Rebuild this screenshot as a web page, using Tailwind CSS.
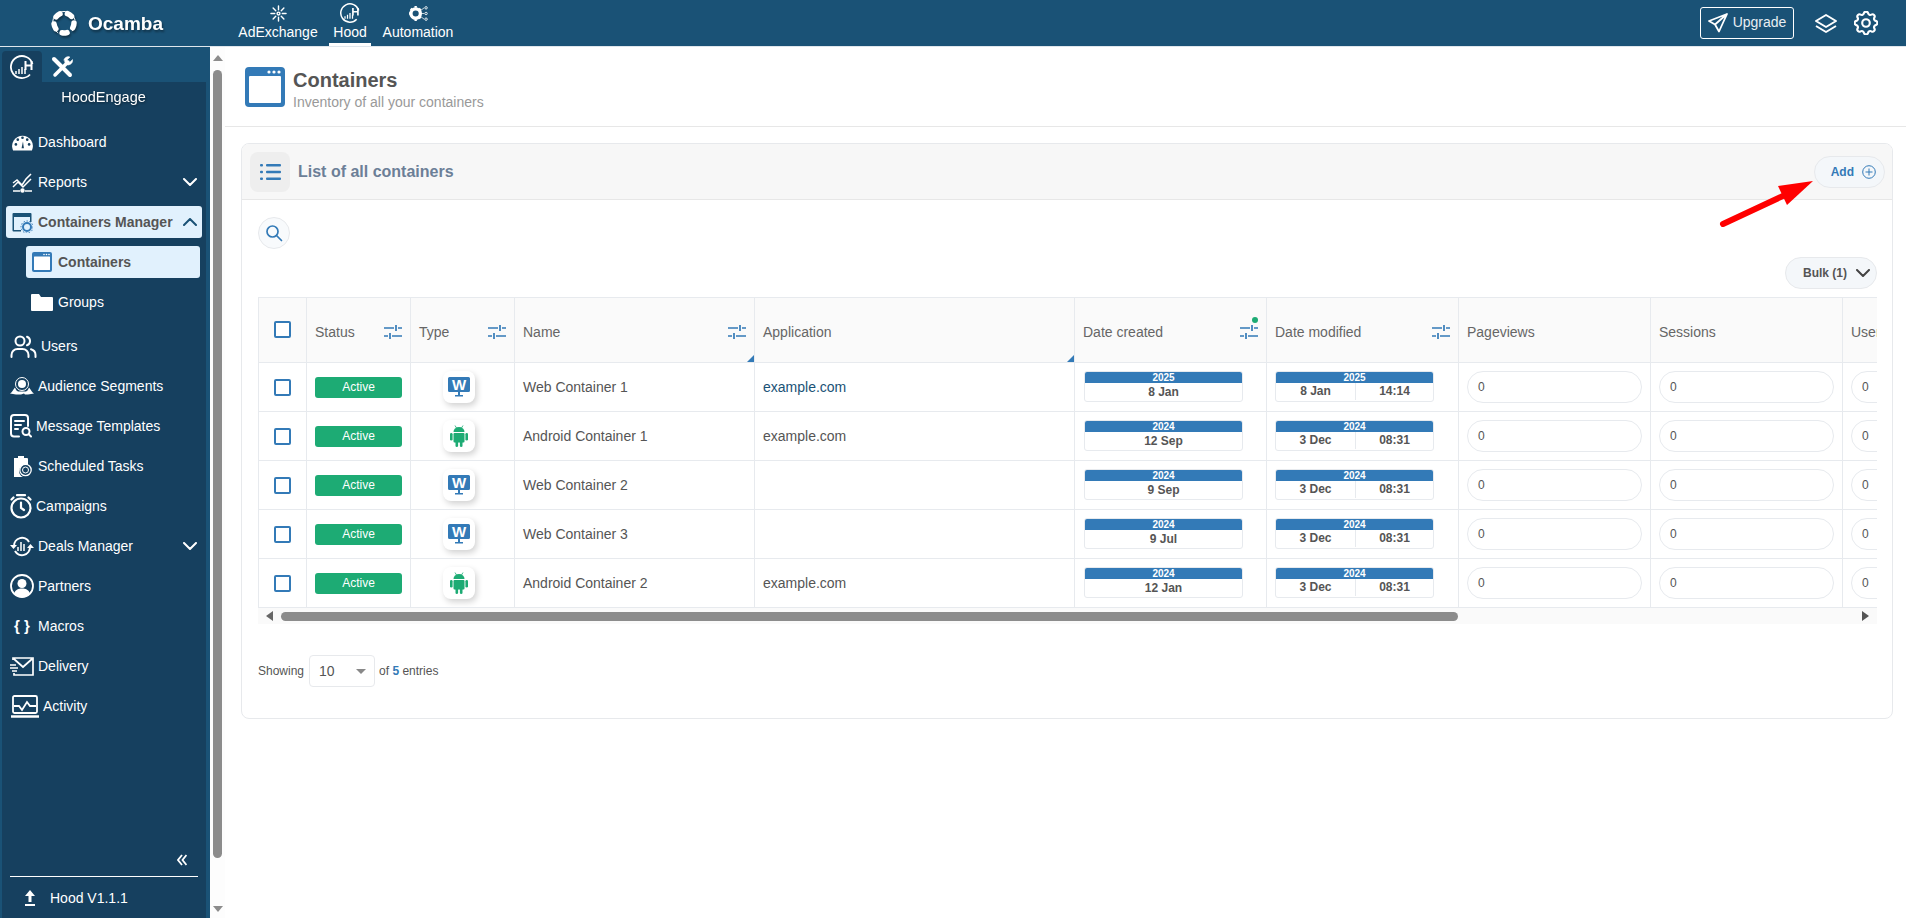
<!DOCTYPE html>
<html lang="en">
<head>
  <meta charset="UTF-8">
  <meta name="viewport" content="width=device-width, initial-scale=1.0">
  <title>Containers</title>
  <script src="https://cdn.jsdelivr.net/npm/@tailwindcss/browser@4"></script>
</head>
<body class="h-screen overflow-hidden bg-white flex flex-col font-['Liberation_Sans',Arial,sans-serif] text-[14px] text-[#555]">

  <!-- shared icons -->
  <svg class="hidden">
    <symbol id="i-window" viewBox="0 0 40 40">
      <rect width="40" height="40" rx="4" fill="#337ab7"/>
      <rect x="4" y="9" width="32" height="27" rx="1" fill="#fff"/>
      <circle cx="24" cy="5" r="1.6" fill="#fff"/><circle cx="29" cy="5" r="1.6" fill="#fff"/><circle cx="34" cy="5" r="1.6" fill="#fff"/>
    </symbol>
    <symbol id="i-sliders" viewBox="0 0 18 14" fill="none" stroke="#337ab7" stroke-width="1.7">
      <path d="M0 3h10M14 3h4M12 0v6M0 11h4M8 11h10M6 8v6"/>
    </symbol>
    <symbol id="i-web" viewBox="0 0 22 20">
      <path d="M1.5 0h19A1.500 1.500 0 0 1 22 1.500v12a1.500 1.500 0 0 1-1.500 1.500h-19A1.500 1.500 0 0 1 0 13.500v-12A1.500 1.500 0 0 1 1.500 0z" fill="#337ab7"/>
      <path d="M10 15h2v3h3v1.500H7V18h3z" fill="#337ab7"/>
      <text x="11" y="12.500" text-anchor="middle" font-size="15" font-weight="700" font-family="Liberation Sans" fill="#fff">W</text>
    </symbol>
    <symbol id="i-android" viewBox="0 0 18 22" fill="#1dab74">
      <rect x="3.500" y="8" width="11" height="9.500" rx="1"/>
      <path d="M3.500 7a5.500 5 0 0 1 11 0z"/>
      <path d="M5 .5 6.500 3M13 .5 11.500 3" stroke="#1dab74" stroke-width=".8"/>
      <rect x="0" y="8" width="2.600" height="7.500" rx="1.300"/><rect x="15.400" y="8" width="2.600" height="7.500" rx="1.300"/>
      <rect x="5.500" y="16" width="2.600" height="6" rx="1.300"/><rect x="9.900" y="16" width="2.600" height="6" rx="1.300"/>
    </symbol>
    <symbol id="i-hood" viewBox="0 0 24 24" fill="none" stroke="#fff">
      <path d="M20 19.500A11 11 0 1 1 22.500 9" stroke-width="1.800"/>
      <path d="M6 19v-3M9 19v-5M12 19v-7M15 19v-5" stroke-width="1.500"/>
      <path d="M15.500 6v9M21.500 6v9M15.500 10.500h6" stroke-width="2"/>
    </symbol>
    <symbol id="i-chev" viewBox="0 0 14 8" fill="none" stroke-width="2" stroke-linecap="round" stroke-linejoin="round">
      <path d="M1 1l6 6 6-6"/>
    </symbol>
  </svg>

  <!-- top bar -->
  <header class="h-[47px] shrink-0 bg-[#1a5276] border-b border-[#dfe6ec] flex items-center text-white relative">
    <div class="w-[237px] pl-[50px] flex items-center gap-[10px]">
      <svg class="w-[28px] h-[28px] drop-shadow-[1px_2px_1px_rgba(0,0,0,0.4)]" viewBox="0 0 28 28" fill="none">
        <circle cx="14" cy="14" r="10" stroke="#fff" stroke-width="5.500" stroke-dasharray="5 7.570" stroke-linecap="round"/>
        <circle cx="14" cy="14" r="11.500" stroke="#fff" stroke-width="1" stroke-dasharray="9 3"/>
      </svg>
      <span class="text-[19px] font-bold leading-none drop-shadow-[1px_2px_1px_rgba(0,0,0,0.4)]">Ocamba</span>
    </div>
    <nav class="flex items-start h-[46px]">
      <a class="w-[82px] flex flex-col items-center pt-[5px]">
        <svg class="w-[17px] h-[17px]" viewBox="0 0 18 18" fill="none" stroke="#fff" stroke-width="1.500" stroke-linecap="round">
          <path d="M9 1v4M9 13v4M1 9h4M13 9h4M3.300 3.300l2.800 2.800M11.900 11.900l2.800 2.800M14.700 3.300l-2.800 2.800M6.100 11.900l-2.800 2.800"/>
          <circle cx="9" cy="9" r="1.500"/>
        </svg>
        <span class="leading-none mt-[3px] whitespace-nowrap">AdExchange</span>
      </a>
      <a class="ml-[10px] w-[42px] h-[46px] flex flex-col items-center pt-[3px] border-b-[3px] border-white">
        <svg class="w-[20px] h-[20px]"><use href="#i-hood"/></svg>
        <span class="leading-none mt-[2px]">Hood</span>
      </a>
      <a class="ml-[11px] w-[72px] flex flex-col items-center pt-[5px]">
        <svg class="w-[21px] h-[17px]" viewBox="0 0 22 18" fill="none" stroke="#fff">
          <circle cx="8" cy="9" r="5" stroke-width="3.500"/>
          <path d="M8 1v2M8 15v2M1 9h2M2.800 3.800l1.500 1.500M11.700 12.700l1.500 1.500M13.200 3.800l-1.500 1.500" stroke-width="2.500"/>
          <path d="M13 9h4M13 6l4-3M13 12l4 3" stroke-width=".8"/>
          <circle cx="19" cy="3" r="1.300" stroke-width=".9"/><circle cx="19" cy="9" r="1.300" stroke-width=".9"/><circle cx="19" cy="15" r="1.300" stroke-width=".9"/>
        </svg>
        <span class="leading-none mt-[3px]">Automation</span>
      </a>
    </nav>
    <div class="ml-auto flex items-center pr-[28px]">
      <button class="w-[94px] h-[32px] border border-white rounded-[3px] flex items-center justify-center gap-[5px] text-[14px] leading-none pb-[3px] text-[#e8eef3]">
        <svg class="w-[20px] h-[20px] mt-[3px]" viewBox="0 0 20 20" fill="none" stroke="#fff" stroke-width="1.800" stroke-linejoin="round">
          <path d="M19 1 1 8l6 3.500L11 18.500zM19 1 7 11.500"/>
        </svg>
        Upgrade
      </button>
      <svg class="ml-[20px] w-[24px] h-[22px]" viewBox="0 0 24 22" fill="none" stroke="#fff" stroke-width="2" stroke-linejoin="round">
        <path d="M12 3 2 9l10 6 10-6z"/>
        <path d="M2 14l10 6 10-6"/>
      </svg>
      <svg class="ml-[16px] w-[24px] h-[24px]" viewBox="2.500 2.500 19 19" fill="none" stroke="#fff" stroke-width="1.700" stroke-linecap="round" stroke-linejoin="round">
        <path d="M10.325 4.317c.426-1.756 2.924-1.756 3.350 0a1.724 1.724 0 0 0 2.573 1.066c1.543-.940 3.310.826 2.370 2.370a1.724 1.724 0 0 0 1.065 2.572c1.756.426 1.756 2.924 0 3.350a1.724 1.724 0 0 0-1.066 2.573c.940 1.543-.826 3.310-2.370 2.370a1.724 1.724 0 0 0-2.572 1.065c-.426 1.756-2.924 1.756-3.350 0a1.724 1.724 0 0 0-2.573-1.066c-1.543.940-3.310-.826-2.370-2.370a1.724 1.724 0 0 0-1.065-2.572c-1.756-.426-1.756-2.924 0-3.350a1.724 1.724 0 0 0 1.066-2.573c-.940-1.543.826-3.310 2.370-2.370 1 .608 2.296.070 2.572-1.065z"/>
        <circle cx="12" cy="12" r="3"/>
      </svg>
    </div>
  </header>

  <div class="flex-1 flex min-h-0">
    <!-- sidebar -->
    <aside class="w-[210px] shrink-0 bg-[#1a5276] pl-[2px] pr-[4px] flex flex-col text-white">
      <div class="h-[35px] flex items-end">
        <div class="w-[40px] h-[31px] bg-[#16405f] rounded-t-[4px] flex items-center justify-center">
          <svg class="w-[24px] h-[24px]"><use href="#i-hood"/></svg>
        </div>
        <div class="w-[40px] h-[31px] flex items-center justify-center">
          <svg class="w-[22px] h-[22px]" viewBox="0 0 22 22" fill="none" stroke="#fff" stroke-linecap="round">
            <path d="M3 3l16 16" stroke-width="4"/>
            <path d="M17 6 4 19" stroke-width="3.500"/>
            <path d="M13 3.500a4.500 4.500 0 0 1 6-2.500l-3 3 2.500 2.500 3-3a4.500 4.500 0 0 1-6.500 5z" fill="#fff" stroke-width=".5"/>
          </svg>
        </div>
      </div>
      <div class="flex-1 bg-[#16405f] flex flex-col min-h-0">
        <div class="h-[32px] flex items-center justify-center text-[14.500px] pr-[1px] drop-shadow-[1px_1px_1px_rgba(0,0,0,0.4)]">HoodEngage</div>
        <nav class="mt-[8px] flex flex-col flex-1 text-[14px]">
          <a class="h-[40px] flex items-center pl-[10px]">
            <svg class="w-[21px] h-[17px] mr-[5px]" viewBox="0 0 22 18">
              <path d="M1 17.500a11 11 0 1 1 20 0z" fill="#fff"/>
              <circle cx="6" cy="6" r="1.400" fill="#16405f"/><circle cx="11" cy="4" r="1.400" fill="#16405f"/><circle cx="16" cy="6" r="1.400" fill="#16405f"/><circle cx="4" cy="11" r="1.400" fill="#16405f"/><circle cx="18" cy="11" r="1.400" fill="#16405f"/>
              <path d="M10 15l1.500-7 1 7z" fill="#16405f"/>
            </svg>
            Dashboard
          </a>
          <a class="h-[40px] flex items-center pl-[10px]">
            <svg class="w-[21px] h-[21px] mr-[5px]" viewBox="0 0 21 21" fill="none" stroke="#fff" stroke-width="1.500">
              <path d="M1 11l4-3 5 5 4-6 5-5M1 15l5-5 5 5 8-8"/>
              <path d="M1 19h7M13 19h7" stroke-width="1.500"/><circle cx="10.500" cy="18.500" r="1.500" fill="#fff"/>
            </svg>
            Reports
            <svg class="ml-auto mr-[9px] w-[14px] h-[8px] stroke-white"><use href="#i-chev"/></svg>
          </a>
          <a class="h-[32px] my-[4px] mx-[4px] bg-[#e1f1fd] rounded-[3px] flex items-center pl-[6px] text-[#555] font-bold">
            <svg class="w-[21px] h-[21px] mr-[5px]" viewBox="0 0 21 21">
              <path d="M1.500 1h17a1 1 0 0 1 1 1v8h-1.500V5H2v13h7v1.500H1.500a1 1 0 0 1-1-1V2a1 1 0 0 1 1-1z" fill="#1a5276"/>
              <circle cx="15" cy="15" r="4" fill="none" stroke="#337ab7" stroke-width="2"/><circle cx="15" cy="15" r="6" fill="none" stroke="#337ab7" stroke-width="1" stroke-dasharray="1.500 1.500"/>
            </svg>
            Containers Manager
            <svg class="ml-auto mr-[5px] w-[14px] h-[8px] stroke-[#1a5276] rotate-180"><use href="#i-chev"/></svg>
          </a>
          <div class="pb-[4px]">
            <a class="h-[32px] my-[4px] ml-[24px] mr-[6px] bg-[#e1f1fd] rounded-[3px] flex items-center pl-[6px] text-[#555] font-bold">
              <svg class="w-[20px] h-[20px] mr-[6px]"><use href="#i-window"/></svg>
              Containers
            </a>
            <a class="h-[40px] ml-[28px] flex items-center">
              <svg class="w-[24px] h-[20px] mr-[4px]" viewBox="0 0 24 20" fill="#fff">
                <path d="M1 3a1 1 0 0 1 1-1h7l2 3h11a1 1 0 0 1 1 1v12a1 1 0 0 1-1 1H2a1 1 0 0 1-1-1z"/>
              </svg>
              Groups
            </a>
          </div>
          <a class="h-[40px] flex items-center pl-[8px]">
            <svg class="w-[27px] h-[23px] mr-[4px]" viewBox="0 0 27 23" fill="none" stroke="#fff" stroke-width="2" stroke-linecap="round">
              <circle cx="10" cy="6" r="4.500"/>
              <path d="M1.500 22v-2a6 6 0 0 1 6-6h5a6 6 0 0 1 6 6v2M17 1.800a4.500 4.500 0 0 1 0 8.500M21 14.300a6 6 0 0 1 4.500 5.700v2"/>
            </svg>
            Users
          </a>
          <a class="h-[40px] flex items-center pl-[8px]">
            <svg class="w-[24px] h-[18px] mr-[4px]" viewBox="0 0 24 18" fill="#fff">
              <circle cx="12" cy="7" r="6.500" fill="none" stroke="#fff" stroke-width="1"/>
              <circle cx="12" cy="7" r="4"/>
              <path d="M0 16.500c2-1 3-3.500 5-6 1 3 2 3.500 3 4h8c1-.5 2-1 3-4 2 2.500 3 5 5 6l-6 1h-3l-1-1-3 1H6z"/>
            </svg>
            Audience Segments
          </a>
          <a class="h-[40px] flex items-center pl-[8px]">
            <svg class="w-[22px] h-[24px] mr-[4px]" viewBox="0 0 22 24" fill="none" stroke="#fff" stroke-width="2" stroke-linecap="round">
              <path d="M9 22.500H4a3 3 0 0 1-3-3V4a3 3 0 0 1 3-3h11a3 3 0 0 1 3 3v8"/>
              <path d="M5 7h9M5 11h6M5 15h3"/>
              <circle cx="16" cy="17.500" r="3.500"/><path d="M19 20.500l2 2"/>
            </svg>
            Message Templates
          </a>
          <a class="h-[40px] flex items-center pl-[11px]">
            <svg class="w-[19px] h-[22px] mr-[6px]" viewBox="0 0 19 22">
              <path d="M1 3h4V1h6v2h3a1 1 0 0 1 1 1v6a6 6 0 0 0-5 12H1z" fill="#fff"/>
              <circle cx="12.500" cy="15" r="5.700" fill="none" stroke="#fff" stroke-width="1.300"/><circle cx="12.500" cy="15" r="3" fill="none" stroke="#fff"/>
            </svg>
            Scheduled Tasks
          </a>
          <a class="h-[40px] flex items-center pl-[8px]">
            <svg class="w-[22px] h-[25px] mr-[4px]" viewBox="0 0 22 25" fill="none" stroke="#fff" stroke-width="2.200" stroke-linecap="round">
              <circle cx="11" cy="14" r="9.500"/>
              <path d="M7 1.200h8M11 8.500V14l3 2M1.500 5.500l2 -2M20.500 5.500l-2-2"/>
            </svg>
            Campaigns
          </a>
          <a class="h-[40px] flex items-center pl-[8px]">
            <svg class="w-[24px] h-[21px] mr-[4px]" viewBox="0 0 24 21" fill="none" stroke="#fff" stroke-width="2">
              <path d="M4 10a8 8 0 0 1 15-4M20 11a8 8 0 0 1-15 4"/>
              <path d="M0 9h7l-3.500 4zM24 12h-7l3.500-4z" fill="#fff" stroke="none"/>
              <path d="M8 15v-4M11 15V6M14 15V8" stroke-width="1.500"/>
            </svg>
            Deals Manager
            <svg class="ml-auto mr-[9px] w-[14px] h-[8px] stroke-white"><use href="#i-chev"/></svg>
          </a>
          <a class="h-[40px] flex items-center pl-[8px]">
            <svg class="w-[24px] h-[24px] mr-[4px]" viewBox="0 0 24 24">
              <circle cx="12" cy="12" r="11" fill="none" stroke="#fff" stroke-width="1.800"/>
              <circle cx="12" cy="9.500" r="4.500" fill="#fff"/>
              <path d="M4 19.500c1.500-4 4.500-5 8-5s6.500 1 8 5a10.500 10.500 0 0 1-16 0z" fill="#fff"/>
            </svg>
            Partners
          </a>
          <a class="h-[40px] flex items-center pl-[12px]">
            <span class="w-[24px] font-bold text-[15px]">{ }</span>
            Macros
          </a>
          <a class="h-[40px] flex items-center pl-[8px]">
            <svg class="w-[24px] h-[19px] mr-[4px]" viewBox="0 0 24 19" fill="none" stroke="#fff" stroke-width="1.700">
              <path d="M3 3V1h20v17H4v-2M4 2l9 8 9-8"/>
              <path d="M0 8h6M0 11h8M2 14h5"/>
            </svg>
            Delivery
          </a>
          <a class="h-[40px] flex items-center pl-[9px]">
            <svg class="w-[28px] h-[23px] mr-[4px]" viewBox="0 0 28 23" fill="none" stroke="#fff" stroke-width="1.800">
              <rect x="2" y="1" width="24" height="17" rx="1.500"/>
              <path d="M3 11h5l3 4 5-8 3 4h6"/>
              <path d="M0 21.500h28" stroke-width="2.500"/>
            </svg>
            Activity
          </a>
          <div class="mt-auto">
            <div class="flex justify-end pr-[19px] pb-[10px]">
              <svg class="w-[10px] h-[12px]" viewBox="0 0 10 12" fill="none" stroke="#fff" stroke-width="1.800">
                <path d="M5 1 1 6l4 5M9.500 1l-4 5 4 5"/>
              </svg>
            </div>
            <div class="mx-[8px] border-t border-white h-[42px] flex items-center">
              <svg class="ml-[15px] w-[10px] h-[16px]" viewBox="0 0 10 16" fill="#fff">
                <path d="M5 0l5 6H6.500v6h-3V6H0zM0 14h10v2H0z"/>
              </svg>
              <span class="ml-[15px] leading-none">Hood V1.1.1</span>
            </div>
          </div>
        </nav>
      </div>
    </aside>

    <!-- page scrollbar -->
    <div class="w-[15px] shrink-0 bg-[#fdfdfd] flex flex-col items-center pt-[8px] pb-[6px]">
      <div class="w-0 h-0 border-x-[5px] border-x-transparent border-b-[6px] border-b-[#8c8c8c]"></div>
      <div class="w-[9px] h-[788px] mt-[9px] bg-[#8c8c8c] rounded-full"></div>
      <div class="mt-auto w-0 h-0 border-x-[5px] border-x-transparent border-t-[6px] border-t-[#8c8c8c]"></div>
    </div>

    <!-- main -->
    <main class="flex-1 min-w-0 relative">
      <div class="h-[80px] border-b border-[#e7e7e7] flex items-center pl-[20px]">
        <svg class="w-[40px] h-[40px] mr-[8px]"><use href="#i-window"/></svg>
        <div class="pt-[4px]">
          <h1 class="text-[20px] font-bold leading-[24px] text-[#555]">Containers</h1>
          <p class="text-[14px] leading-[16px] mt-[2px] text-[#999]">Inventory of all your containers</p>
        </div>
      </div>

      <section class="ml-[16px] mr-[13px] mt-[16px] h-[576px] border border-[#e7e9ec] rounded-[8px] overflow-hidden">
        <div class="h-[56px] bg-[#f7f7f7] border-b border-[#e7e7e7] flex items-center pl-[8px] pr-[7px]">
          <div class="w-[40px] h-[40px] bg-[#eeeeee] rounded-[8px] flex items-center justify-center">
            <svg class="w-[21px] h-[16px]" viewBox="0 0 21 16" fill="#337ab7">
              <rect width="3" height="2.500" rx="1"/><rect x="6" width="15" height="2.500" rx="1"/>
              <rect y="6.700" width="3" height="2.500" rx="1"/><rect x="6" y="6.700" width="15" height="2.500" rx="1"/>
              <rect y="13.500" width="3" height="2.500" rx="1"/><rect x="6" y="13.500" width="15" height="2.500" rx="1"/>
            </svg>
          </div>
          <h2 class="ml-[8px] text-[16px] font-bold text-[#6c7f97]">List of all containers</h2>
          <button class="ml-auto w-[71px] h-[32px] bg-[#f4f7fa] border border-[#e7e9ec] rounded-full flex items-center justify-end pr-[8px] text-[12px] font-bold text-[#337ab7]">
            Add
            <svg class="ml-[8px] w-[14px] h-[14px]" viewBox="0 0 14 14" fill="none" stroke="#337ab7" stroke-width="1">
              <circle cx="7" cy="7" r="6.300"/><path d="M3.500 7h7M7 3.500v7"/>
            </svg>
          </button>
        </div>

        <div class="pl-[16px] pr-[15px] pt-[17px]">
          <button class="w-[32px] h-[32px] bg-[#f8fafc] border border-[#e7e9ec] rounded-full flex items-center justify-center">
            <svg class="w-[18px] h-[18px]" viewBox="0 0 18 18" fill="none" stroke="#337ab7" stroke-width="1.700" stroke-linecap="round">
              <circle cx="7.500" cy="7.500" r="5.500"/><path d="M11.500 11.500l5 5"/>
            </svg>
          </button>
          <div class="flex justify-end mt-[8px]">
            <button class="w-[92px] h-[32px] bg-[#f4f7fa] border border-[#e7e9ec] rounded-full flex items-center pl-[17px] text-[12px] font-bold text-[#555]">
              Bulk (1)
              <svg class="ml-[9px] w-[14px] h-[8px] stroke-[#444]"><use href="#i-chev"/></svg>
            </button>
          </div>

          <div class="mt-[8px] overflow-hidden">
            <table class="table-fixed border-collapse w-[1820px]">
              <colgroup>
                <col class="w-[48px]"><col class="w-[104px]"><col class="w-[104px]"><col class="w-[240px]"><col class="w-[320px]"><col class="w-[192px]"><col class="w-[192px]"><col class="w-[192px]"><col class="w-[192px]"><col class="w-[236px]">
              </colgroup>
              <thead>
                <tr class="h-[65px] bg-[#fafafa] text-[#666] text-left">
                  <th class="border border-[#e7eaee] font-normal"><div class="mx-auto -mt-[1px] w-[17px] h-[17px] border-2 border-[#337ab7] rounded-[2px] bg-white"></div></th>
                  <th class="border border-[#e7eaee] font-normal pl-[8px] pr-[8px] pt-[4px]"><div class="flex items-center justify-between">Status <svg class="w-[18px] h-[14px]"><use href="#i-sliders"/></svg></div></th>
                  <th class="border border-[#e7eaee] font-normal pl-[8px] pr-[8px] pt-[4px]"><div class="flex items-center justify-between">Type <svg class="w-[18px] h-[14px]"><use href="#i-sliders"/></svg></div></th>
                  <th class="border border-[#e7eaee] font-normal pl-[8px] pr-[8px] pt-[4px] relative"><div class="flex items-center justify-between">Name <svg class="w-[18px] h-[14px]"><use href="#i-sliders"/></svg></div><span class="absolute right-0 bottom-0 w-0 h-0 border-l-[7px] border-l-transparent border-b-[7px] border-b-[#337ab7]"></span></th>
                  <th class="border border-[#e7eaee] font-normal pl-[8px] pr-[8px] pt-[4px] relative">Application<span class="absolute right-0 bottom-0 w-0 h-0 border-l-[7px] border-l-transparent border-b-[7px] border-b-[#337ab7]"></span></th>
                  <th class="border border-[#e7eaee] font-normal pl-[8px] pr-[8px] pt-[4px] relative"><div class="flex items-center justify-between">Date created <svg class="w-[18px] h-[14px]"><use href="#i-sliders"/></svg></div><span class="absolute right-[8px] top-[19px] w-[6px] h-[6px] rounded-full bg-[#1dab74]"></span></th>
                  <th class="border border-[#e7eaee] font-normal pl-[8px] pr-[8px] pt-[4px]"><div class="flex items-center justify-between">Date modified <svg class="w-[18px] h-[14px]"><use href="#i-sliders"/></svg></div></th>
                  <th class="border border-[#e7eaee] font-normal pl-[8px] pt-[4px]">Pageviews</th>
                  <th class="border border-[#e7eaee] font-normal pl-[8px] pt-[4px]">Sessions</th>
                  <th class="border border-[#e7eaee] font-normal pl-[8px] pt-[4px]">Users</th>
                </tr>
              </thead>
              <tbody id="rows"></tbody>
            </table>
            <div class="h-[16px] bg-[#fafafa] flex items-center pl-[8px] pr-[8px]">
              <div class="w-0 h-0 border-y-[5px] border-y-transparent border-r-[7px] border-r-[#666]"></div>
              <div class="ml-[8px] w-[1177px] h-[9px] bg-[#8c8c8c] rounded-full"></div>
              <div class="ml-auto w-0 h-0 border-y-[5px] border-y-transparent border-l-[7px] border-l-[#555]"></div>
            </div>
          </div>

          <div class="mt-[31px] flex items-center text-[12px] text-[#555]">
            Showing
            <div class="ml-[5px] w-[66px] h-[32px] border border-[#e7e9ec] rounded-[4px] flex items-center pl-[9px] pr-[8px] text-[14px]">
              10
              <span class="ml-auto w-0 h-0 border-x-[5px] border-x-transparent border-t-[5px] border-t-[#888]"></span>
            </div>
            <span class="ml-[4px]">of <b class="font-bold text-[#337ab7]">5</b> entries</span>
          </div>
        </div>
      </section>

      <!-- callout arrow pointing at the Add button -->
      <svg class="absolute left-[1490px] top-[125px] w-[100px] h-[60px] pointer-events-none" viewBox="0 0 100 60" fill="#ff0000">
        <path d="M8 52 70 23" stroke="#ff0000" stroke-width="6" stroke-linecap="round"/>
        <path d="M98 9 63 14l9 19z"/>
      </svg>
    </main>
  </div>

  <script>
    const rows = [
      { kind: 'web', name: 'Web Container 1', app: 'example.com', link: true, year: '2025', created: '8 Jan', modYear: '2025', modified: '8 Jan', time: '14:14' },
      { kind: 'android', name: 'Android Container 1', app: 'example.com', year: '2024', created: '12 Sep', modYear: '2024', modified: '3 Dec', time: '08:31' },
      { kind: 'web', name: 'Web Container 2', app: '', year: '2024', created: '9 Sep', modYear: '2024', modified: '3 Dec', time: '08:31' },
      { kind: 'web', name: 'Web Container 3', app: '', year: '2024', created: '9 Jul', modYear: '2024', modified: '3 Dec', time: '08:31' },
      { kind: 'android', name: 'Android Container 2', app: 'example.com', year: '2024', created: '12 Jan', modYear: '2024', modified: '3 Dec', time: '08:31' },
    ];

    const cell = 'border border-[#e7eaee]';
    const input = '<div class="w-[175px] h-[32px] border border-[#e7eaee] rounded-full flex items-center pl-[10px] text-[12px]">0</div>';

    document.getElementById('rows').innerHTML = rows.map(r => `
      <tr class="h-[49px] text-[#555]">
        <td class="${cell}"><div class="mx-auto w-[17px] h-[17px] border-2 border-[#337ab7] rounded-[2px]"></div></td>
        <td class="${cell}"><div class="mx-auto w-[87px] h-[21px] bg-[#1dab74] rounded-[3px] text-white text-[12px] flex items-center justify-center">Active</div></td>
        <td class="${cell}"><div class="ml-[32px] w-[32px] h-[32px] bg-white rounded-[8px] shadow-[2px_3px_6px_rgba(0,0,0,0.18)] flex items-center justify-center">
          ${r.kind === 'web'
            ? '<svg class="w-[22px] h-[20px]"><use href="#i-web"/></svg>'
            : '<svg class="w-[18px] h-[22px]"><use href="#i-android"/></svg>'}
        </div></td>
        <td class="${cell} pl-[8px]">${r.name}</td>
        <td class="${cell} pl-[8px] ${r.link ? 'text-[#1a5276]' : ''}">${r.app}</td>
        <td class="${cell}"><div class="ml-[9px] -mt-[1px] w-[159px] h-[31px] border border-[#e7eaee] rounded-[3px] overflow-hidden text-center">
          <div class="h-[11px] bg-[#337ab7] text-white text-[10px] font-bold leading-[11px]">${r.year}</div>
          <div class="text-[12px] font-bold leading-[18px]">${r.created}</div>
        </div></td>
        <td class="${cell}"><div class="ml-[8px] -mt-[1px] w-[159px] h-[31px] border border-[#e7eaee] rounded-[3px] overflow-hidden text-center">
          <div class="h-[11px] bg-[#337ab7] text-white text-[10px] font-bold leading-[11px]">${r.modYear}</div>
          <div class="flex text-[12px] font-bold leading-[17px]"><span class="w-[80px] border-r border-[#e7eaee]">${r.modified}</span><span class="flex-1">${r.time}</span></div>
        </div></td>
        <td class="${cell} pl-[8px]">${input}</td>
        <td class="${cell} pl-[8px]">${input}</td>
        <td class="${cell} pl-[8px]">${input}</td>
      </tr>`).join('');
  </script>
</body>
</html>
